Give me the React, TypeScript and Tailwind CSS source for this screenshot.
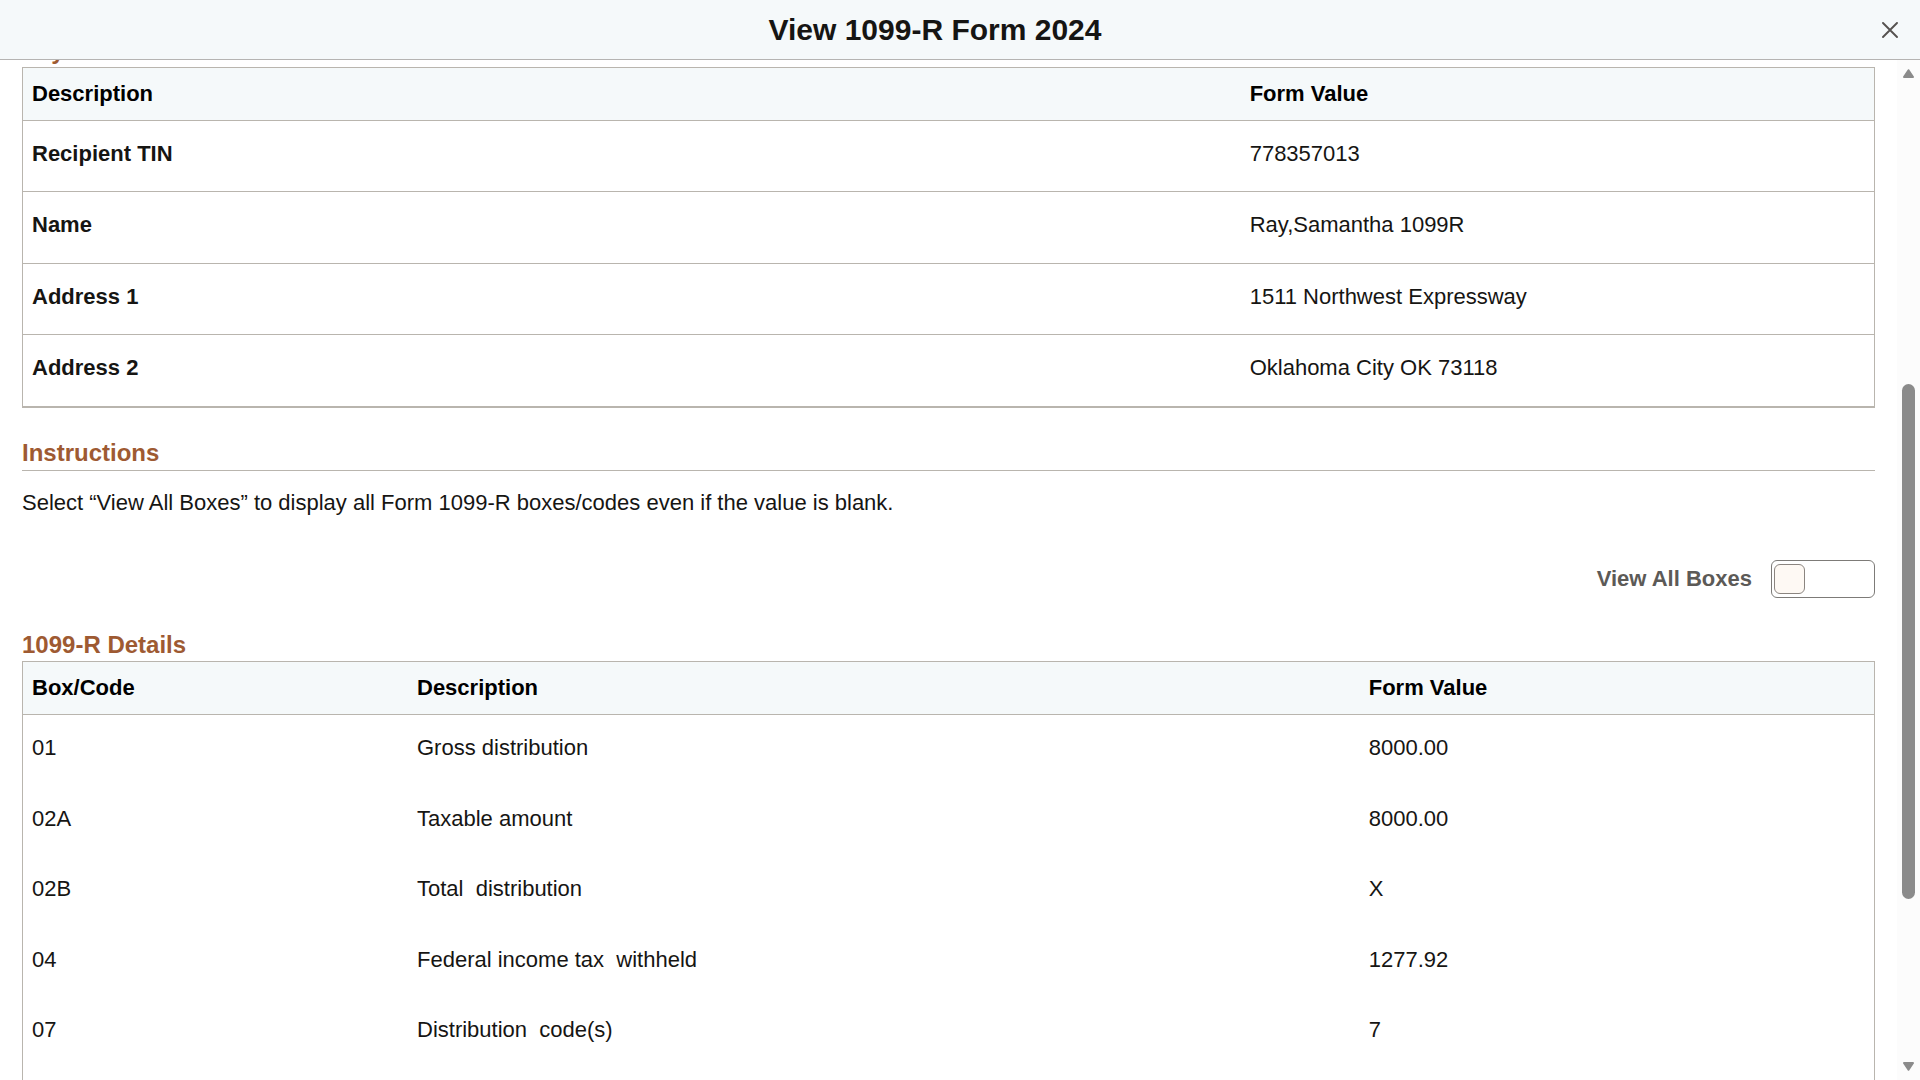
import React, { useState } from 'react';

const payeeRows = [
  { label: 'Recipient TIN', value: '778357013' },
  { label: 'Name', value: 'Ray,Samantha 1099R' },
  { label: 'Address 1', value: '1511 Northwest Expressway' },
  { label: 'Address 2', value: 'Oklahoma City OK 73118' },
];

// some descriptions come with a double space in them, keep it
const boxRows = [
  { code: '01', description: 'Gross distribution', value: '8000.00' },
  { code: '02A', description: 'Taxable amount', value: '8000.00' },
  { code: '02B', description: 'Total  distribution', value: 'X' },
  { code: '04', description: 'Federal income tax  withheld', value: '1277.92' },
  { code: '07', description: 'Distribution  code(s)', value: '7' },
];

function ModalHeader() {
  return (
    <header className="flex h-[60px] shrink-0 items-center border-b border-[#b5b4b2] bg-[#f5f9fa] pr-[10px]">
      <h1 className="flex-1 text-center text-[30px] leading-9 font-bold">View 1099-R Form 2024</h1>
      <button type="button" aria-label="Close" className="flex w-10 justify-center text-[#55524f]">
        <svg width="16" height="16" viewBox="0 0 16 16" fill="none" stroke="currentColor" strokeWidth="1.9" strokeLinecap="round">
          <path d="M1 1l14 14M15 1L1 15" />
        </svg>
      </button>
    </header>
  );
}

function SectionTitle({ children }: { children: React.ReactNode }) {
  return <h2 className="text-2xl leading-8 font-bold text-[#9e5a32]">{children}</h2>;
}

function PayeeTable() {
  return (
    <table className="h-[341px] w-full table-fixed border-separate border-spacing-0 border-x border-t border-[#b9b5ae] text-left">
      <thead>
        <tr className="h-[53px] bg-[#f5f9fa] text-black">
          <th className="w-[66%] border-b border-[#b9b5ae] px-[9px] py-3">Description</th>
          <th className="border-b border-[#b9b5ae] px-[5px] py-3">Form Value</th>
        </tr>
      </thead>
      <tbody>
        {payeeRows.map((row) => (
          <tr key={row.label} className="group align-top">
            <th className="border-b border-[#b9b5ae] px-[9px] pt-[19px] group-last:border-b-2">{row.label}</th>
            <td className="border-b border-[#b9b5ae] px-[5px] pt-[19px] group-last:border-b-2">{row.value}</td>
          </tr>
        ))}
      </tbody>
    </table>
  );
}

function DetailsTable() {
  return (
    <div className="flex-1 border-x border-t border-[#b9b5ae]">
      <table className="h-[406px] w-full table-fixed border-separate border-spacing-0 text-left">
        <thead>
          <tr className="h-[53px] bg-[#f5f9fa] text-black">
            <th className="w-[385px] border-b border-[#b9b5ae] px-[9px] py-3">Box/Code</th>
            <th className="border-b border-[#b9b5ae] px-[9px] py-3">Description</th>
            <th className="w-[28%] border-b border-[#b9b5ae] px-[13px] py-3">Form Value</th>
          </tr>
        </thead>
        <tbody>
          {boxRows.map((row) => (
            <tr key={row.code} className="align-top">
              <td className="px-[9px] pt-[19px]">{row.code}</td>
              <td className="px-[9px] pt-[19px] whitespace-pre">{row.description}</td>
              <td className="px-[13px] pt-[19px]">{row.value}</td>
            </tr>
          ))}
        </tbody>
      </table>
    </div>
  );
}

function Scrollbar() {
  return (
    <div className="flex w-[23px] shrink-0 flex-col items-center bg-[#fcfcfc] py-[9px]">
      <svg width="11" height="9" viewBox="0 0 11 9" fill="#8b8b8b" stroke="#8b8b8b" strokeWidth="2" strokeLinejoin="round">
        <path d="M5.5 1.2L10 8H1z" />
      </svg>
      <div className="flex w-[13px] flex-1 flex-col">
        <div className="flex-[306]" />
        <div className="flex-[515] rounded-full bg-[#8b8b8b]" />
        <div className="flex-[163]" />
      </div>
      <svg width="11" height="9" viewBox="0 0 11 9" fill="#8b8b8b" stroke="#8b8b8b" strokeWidth="2" strokeLinejoin="round">
        <path d="M5.5 7.8L10 1H1z" />
      </svg>
    </div>
  );
}

export default function App() {
  const [viewAll, setViewAll] = useState(false);

  return (
    <div className="flex h-screen flex-col bg-white font-['Liberation_Sans',Arial,sans-serif] text-[22px] leading-7 text-[#161513]">
      <ModalHeader />
      <div className="flex min-h-0 flex-1">
        <main className="flex min-w-0 flex-1 flex-col overflow-hidden px-[22px]">
          {/* first section is partly scrolled out under the header */}
          <section className="-mt-[25px]">
            <SectionTitle>Payee</SectionTitle>
            <PayeeTable />
          </section>

          <section className="mt-[29px]">
            <div className="border-b border-[#b9b5ae] pb-px">
              <SectionTitle>Instructions</SectionTitle>
            </div>
            <p className="mt-[18px]">
              Select “View All Boxes” to display all Form 1099-R boxes/codes even if the value is blank.
            </p>
          </section>

          <div className="mt-[43px] flex items-center justify-end gap-[19px]">
            <label htmlFor="view-all" className="font-bold text-[#5c5a57]">View All Boxes</label>
            <span className="grid h-[38px] w-[104px] items-center rounded-md border border-[#7d7b78] bg-white px-[2px]">
              <input
                id="view-all"
                type="checkbox"
                role="switch"
                checked={viewAll}
                onChange={(e) => setViewAll(e.target.checked)}
                className="h-[30px] w-[31px] appearance-none rounded-md border border-[#8b8580] bg-[#fef9f4] checked:justify-self-end"
              />
            </span>
          </div>

          <section className="mt-[31px] flex flex-1 flex-col">
            <SectionTitle>1099-R Details</SectionTitle>
            <DetailsTable />
          </section>
        </main>
        <Scrollbar />
      </div>
    </div>
  );
}
